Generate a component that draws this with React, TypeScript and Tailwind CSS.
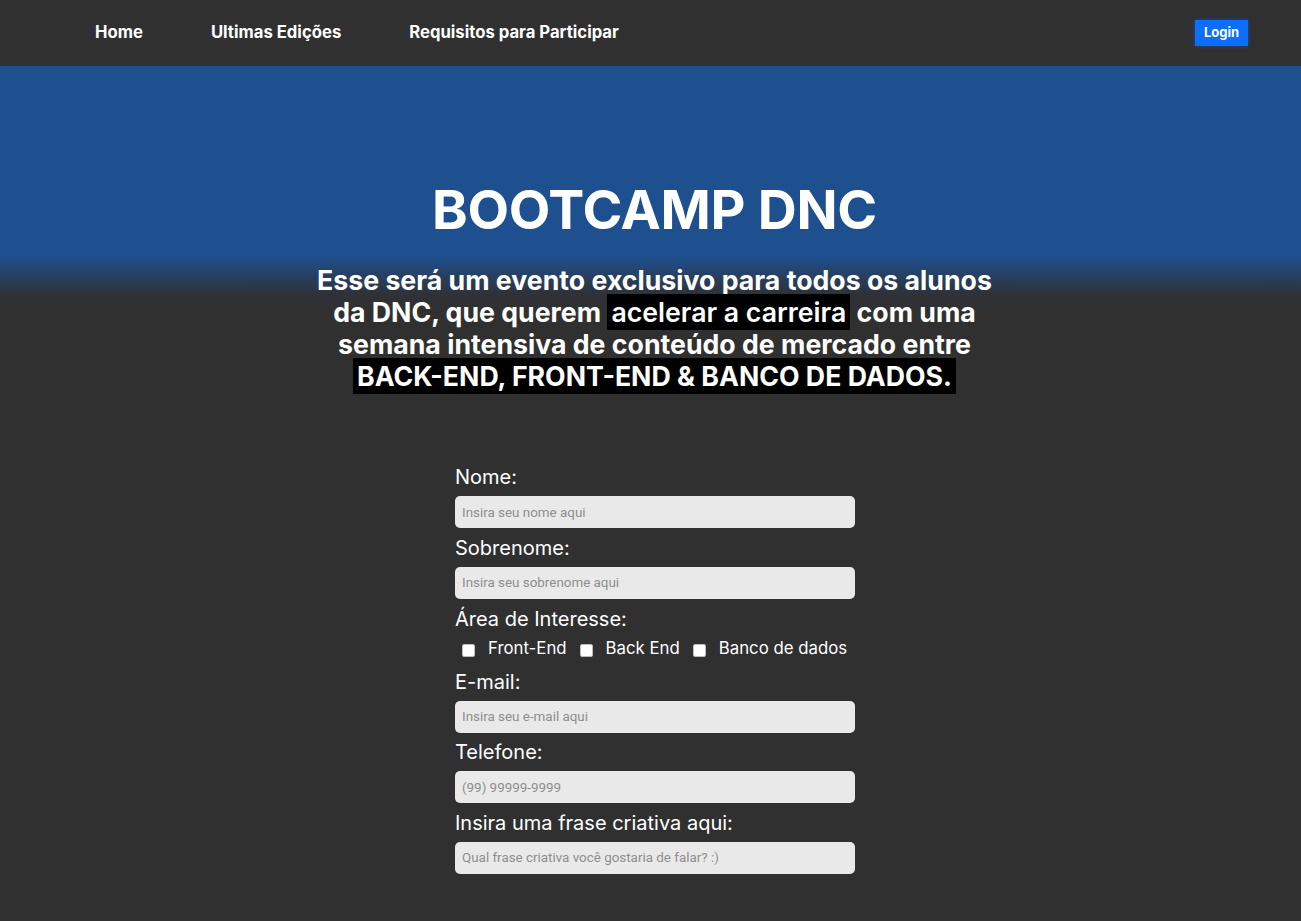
import React from "react";

const fields = [
  { label: "Nome:", placeholder: "Insira seu nome aqui" },
  { label: "Sobrenome:", placeholder: "Insira seu sobrenome aqui" },
];

const fields2 = [
  { label: "E-mail:", placeholder: "Insira seu e-mail aqui" },
  { label: "Telefone:", placeholder: "(99) 99999-9999" },
  { label: "Insira uma frase criativa aqui:", placeholder: "Qual frase criativa você gostaria de falar? :)" },
];

function Field({ label, placeholder, first }: { label: string; placeholder: string; first?: boolean }) {
  return (
    <div className={first ? "" : "mt-[7.5px]"}>
      <label className="block h-[24px] text-[20px] leading-[24px] text-white">{label}</label>
      <input
        type="text"
        placeholder={placeholder}
        className="mt-[7px] block h-[32px] w-full rounded-[5px] bg-[#e9e9e9] px-[7px] font-['Roboto',sans-serif] text-[13.4px] text-gray-800 outline-none placeholder:text-[#8e8e8e]"
      />
    </div>
  );
}

export default function App() {
  return (
    <div className="min-h-screen bg-[#303030] font-['Inter',sans-serif] text-white">
      <nav className="flex h-[66px] items-center justify-between pl-[95px] pr-[53px]">
        <ul className="flex items-center gap-[68px] text-[16.7px] font-bold">
          <li>Home</li>
          <li>Ultimas Edições</li>
          <li>Requisitos para Participar</li>
        </ul>
        <button className="h-[26px] w-[53px] bg-[#0d6efd] text-[13px] font-bold shadow-[0_0_4px_rgba(13,110,253,0.5)]">
          Login
        </button>
      </nav>

      <header className="flex flex-col items-center bg-[linear-gradient(to_bottom,#1e4f8e_0px,#1e4f8e_190px,#2f3135_230px,#303030_248px)] pt-[112px] pb-[60px]">
        <h1 className="pl-[8px] text-[54px] font-bold leading-[64px] tracking-[-0.3px]">BOOTCAMP DNC</h1>
        <p className="mt-[22px] w-[704px] pl-[8px] text-center text-[26.7px] font-bold leading-[32px]">
          Esse será um evento exclusivo para todos os alunos da DNC, que querem{" "}
          <span className="bg-black px-[4px] py-[2px] font-semibold">acelerar a carreira</span> com uma semana intensiva de
          conteúdo de mercado entre{" "}
          <span className="bg-black px-[4px] py-[2px]">BACK-END, FRONT-END &amp; BANCO DE DADOS.</span>
        </p>
      </header>

      <div className="flex justify-center pl-[9px]">
        <form className="w-[400px] pt-[13px] pb-[46px]">
          {fields.map((f, i) => (
            <Field key={f.label} label={f.label} placeholder={f.placeholder} first={i === 0} />
          ))}
          <div className="mt-[8px]">
            <label className="block h-[24px] text-[20px] leading-[24px]">Área de Interesse:</label>
            <div className="mt-[6px] flex h-[24px] items-center pl-[7px] text-[16.8px]">
              <input type="checkbox" className="mt-[3px] h-[13px] w-[13px] appearance-none rounded-[2px] border border-[#bdbdbd] bg-white" />
              <span className="ml-[13px]">Front-End</span>
              <input type="checkbox" className="mt-[3px] ml-[13px] h-[13px] w-[13px] appearance-none rounded-[2px] border border-[#bdbdbd] bg-white" />
              <span className="ml-[13px]">Back End</span>
              <input type="checkbox" className="mt-[3px] ml-[13px] h-[13px] w-[13px] appearance-none rounded-[2px] border border-[#bdbdbd] bg-white" />
              <span className="ml-[13px]">Banco de dados</span>
            </div>
          </div>
          <div className="mt-[9px]">
            {fields2.map((f, i) => (
              <Field key={f.label} label={f.label} placeholder={f.placeholder} first={i === 0} />
            ))}
          </div>
        </form>
      </div>
    </div>
  );
}
